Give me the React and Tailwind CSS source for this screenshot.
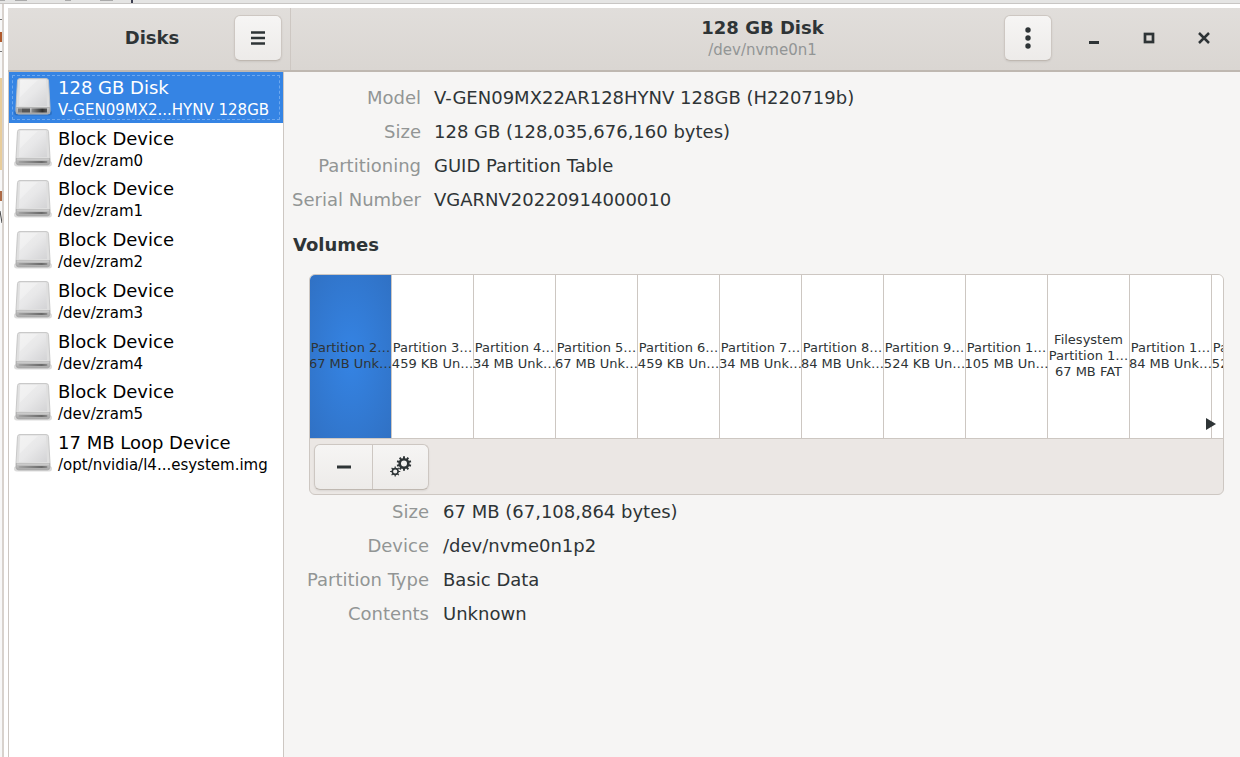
import React from "react";

const disks = [
  { name: "128 GB Disk", path: "V-GEN09MX2...HYNV 128GB", internal: true },
  { name: "Block Device", path: "/dev/zram0" },
  { name: "Block Device", path: "/dev/zram1" },
  { name: "Block Device", path: "/dev/zram2" },
  { name: "Block Device", path: "/dev/zram3" },
  { name: "Block Device", path: "/dev/zram4" },
  { name: "Block Device", path: "/dev/zram5" },
  { name: "17 MB Loop Device", path: "/opt/nvidia/l4...esystem.img" },
];

const volumes = [
  ["Partition 2…", "67 MB Unk…"],
  ["Partition 3…", "459 KB Un…"],
  ["Partition 4…", "34 MB Unk…"],
  ["Partition 5…", "67 MB Unk…"],
  ["Partition 6…", "459 KB Un…"],
  ["Partition 7…", "34 MB Unk…"],
  ["Partition 8…", "84 MB Unk…"],
  ["Partition 9…", "524 KB Un…"],
  ["Partition 1…", "105 MB Un…"],
  ["Filesystem", "Partition 1…", "67 MB FAT"],
  ["Partition 1…", "84 MB Unk…"],
  ["Partition 1…", "524 KB Un…"],
];

const diskInfo = [
  ["Model", "V-GEN09MX22AR128HYNV 128GB (H220719b)"],
  ["Size", "128 GB (128,035,676,160 bytes)"],
  ["Partitioning", "GUID Partition Table"],
  ["Serial Number", "VGARNV20220914000010"],
];

const volumeInfo = [
  ["Size", "67 MB (67,108,864 bytes)"],
  ["Device", "/dev/nvme0n1p2"],
  ["Partition Type", "Basic Data"],
  ["Contents", "Unknown"],
];

const raised =
  "border border-[#cdc7c2] border-b-[#bfb8b1] bg-linear-to-b from-[#f6f5f4] to-[#edebe9] shadow-[0_1px_2px_rgba(0,0,0,0.08)]";

function DriveIcon({ internal }) {
  return (
    <svg width="38" height="40" viewBox="0 0 38 40" className="shrink-0" aria-hidden="true">
      <defs>
        <linearGradient id="driveTop" x1="0" y1="0" x2="1" y2="1">
          <stop offset="0" stopColor="#f0f0f0" />
          <stop offset="0.5" stopColor="#e8e8e9" />
          <stop offset="1" stopColor="#d3d3d5" />
        </linearGradient>
        <linearGradient id="driveFront" x1="0" y1="0" x2="0" y2="1">
          <stop offset="0" stopColor="#c6c6c6" />
          <stop offset="1" stopColor="#a8a8a8" />
        </linearGradient>
        <linearGradient id="driveSlot" x1="0" y1="0" x2="1" y2="0">
          <stop offset="0" stopColor="#a4a4a4" />
          <stop offset="0.8" stopColor="#6a6a6a" />
          <stop offset="1" stopColor="#8c8c8c" />
        </linearGradient>
        <linearGradient id="drivePort" x1="0" y1="0" x2="1" y2="0">
          <stop offset="0" stopColor="#8a8a8a" />
          <stop offset="0.7" stopColor="#303030" />
          <stop offset="1" stopColor="#555" />
        </linearGradient>
      </defs>
      <rect x="0" y="33" width="38" height="5.500" rx="2.700" fill="#000" opacity="0.14" />
      <path d="M3.500 3.500Q3.700 1.500 6 1.500H32Q34.300 1.500 34.500 3.500L36 30V34.500Q36 37 33.500 37H4.500Q2 37 2 34.500V30Z" fill="#dfdfdf" stroke="#c4c4c4" strokeWidth="0.9" />
      <path d="M6 3Q6.100 2.500 7 2.500H31Q31.900 2.500 32 3L33 29H5Z" fill="url(#driveTop)" />
      <path d="M6.500 3H24Q13 13 5.500 21Z" fill="#fff" opacity="0.25" />
      <path d="M2.300 30.500H35.700V34.500Q35.700 36.700 33.500 36.700H4.500Q2.300 36.700 2.300 34.500Z" fill="url(#driveFront)" stroke="#9f9f9f" strokeWidth="0.6" />
      {internal ? (
        <g>
          <rect x="4" y="31.500" width="4" height="4" fill="#7d7d7d" />
          <rect x="8" y="31.500" width="8" height="4" fill="#565656" />
          <rect x="17.500" y="31.500" width="15.500" height="4" fill="url(#drivePort)" />
        </g>
      ) : (
        <g>
          <path d="M3 31H35" stroke="#d8d8d8" strokeWidth="0.8" />
          <rect x="4.500" y="33" width="29" height="2" rx="1" fill="url(#driveSlot)" />
        </g>
      )}
    </svg>
  );
}

function Gear({ cx, cy, r, teeth, width, reach }) {
  return (
    <g transform={`translate(${cx} ${cy})`} stroke="#2e3436" fill="none">
      <circle r={r} strokeWidth={width} />
      {Array.from({ length: teeth }, (_, i) => (
        <path
          key={i}
          d={`M0 ${-r}V${-reach}`}
          strokeWidth={width * 0.75}
          transform={`rotate(${(360 / teeth) * i})`}
        />
      ))}
    </g>
  );
}

function InfoList({ rows, columns }) {
  return (
    <dl className={`grid ${columns} auto-rows-[34px] items-center text-[18px] leading-[22px]`}>
      {rows.map(([label, value]) => (
        <React.Fragment key={label}>
          <dt className="flex justify-end whitespace-nowrap text-[#929595]">{label}</dt>
          <dd className="text-[#2e3436]">{value}</dd>
        </React.Fragment>
      ))}
    </dl>
  );
}

export default function App() {
  return (
    <div className="flex h-screen flex-col overflow-hidden bg-white font-['DejaVu_Sans',sans-serif] text-[#2e3436]">
      <div className="h-1 shrink-0 border-b border-[#c8c6c4] bg-[#e5e5e4]">
        <svg width="150" height="3" viewBox="0 0 150 3" aria-hidden="true">
          <path d="M0 0H5M15 0H27M65 0H71M100 0H113" stroke="#aaa" strokeWidth="2" />
          <path d="M132 0V3" stroke="#3c3f50" strokeWidth="2" />
        </svg>
      </div>
      <div className="flex min-h-0 flex-1">
        <div className="w-1 shrink-0 border-r-2 border-[#d8d2cd] bg-[#f8f8f8]">
          <svg width="2" height="240" viewBox="0 0 2 240" aria-hidden="true">
            <path d="M0 15.500H2M0 47.500H2" stroke="#777" />
            <path d="M0 28H2V38H0Z" fill="#b05a2c" />
            <path d="M0 74H2V166H0Z" fill="#e8cd9b" />
            <path d="M0 187H2V197H0Z" fill="#ad6a45" />
            <path d="M0 207L2 219" stroke="#444" />
          </svg>
        </div>
        <div className="flex min-w-0 flex-1 flex-col pl-1 pt-1">
          <header className="flex h-16 shrink-0 border-b-2 border-[#bfb8b1] bg-linear-to-b from-[#e1dedb] to-[#dad6d2]">
            <div className="flex w-[283px] shrink-0 items-center border-r border-[#cdc7c2] pb-0.5 pr-2">
              <h1 className="flex-1 pl-[62px] text-center text-[18px] font-bold leading-[22px]">Disks</h1>
              <button aria-label="Menu" className={`flex h-[46px] w-12 items-center justify-center rounded-md ${raised}`}>
                <svg width="14" height="14" viewBox="0 0 14 14" aria-hidden="true">
                  <path d="M0 1.500H14M0 7H14M0 12.500H14" stroke="#2e3436" strokeWidth="2.500" />
                </svg>
              </button>
            </div>
            <div className="flex min-w-0 flex-1 items-center pb-0.5 pr-[22px]">
              <div className="min-w-0 flex-1 pl-[230px] pt-0.5 text-center">
                <h2 className="text-[18px] font-bold leading-[22px]">128 GB Disk</h2>
                <p className="text-[15px] leading-[22px] text-[#929595]">/dev/nvme0n1</p>
              </div>
              <div className="flex shrink-0 items-center">
                <button aria-label="Drive options" className={`flex h-[46px] w-12 items-center justify-center rounded-md ${raised}`}>
                  <svg width="6" height="22" viewBox="0 0 6 22" fill="#2e3436" aria-hidden="true">
                    <circle cx="3" cy="3" r="2.700" />
                    <circle cx="3" cy="11" r="2.700" />
                    <circle cx="3" cy="19" r="2.700" />
                  </svg>
                </button>
                <button aria-label="Minimize" className="ml-7 flex size-7 items-center justify-center">
                  <svg width="12" height="12" viewBox="0 0 12 12" aria-hidden="true"><path d="M1 10.500H11" stroke="#2e3436" strokeWidth="3" /></svg>
                </button>
                <button aria-label="Maximize" className="ml-[27px] flex size-7 items-center justify-center">
                  <svg width="12" height="12" viewBox="0 0 12 12" aria-hidden="true"><rect x="2" y="2" width="8" height="8" fill="none" stroke="#2e3436" strokeWidth="2.700" /></svg>
                </button>
                <button aria-label="Close" className="ml-[27px] flex size-7 items-center justify-center">
                  <svg width="12" height="12" viewBox="0 0 12 12" aria-hidden="true"><path d="M1 1L11 11M11 1L1 11" stroke="#2e3436" strokeWidth="2.500" /></svg>
                </button>
              </div>
            </div>
          </header>
          <div className="flex min-h-0 flex-1">
            <nav aria-label="Disks" className="w-[276px] shrink-0 border-x border-[#cdc7c2] bg-white">
              <ul className="grid h-[406px] grid-rows-8">
                {disks.map((disk, i) => (
                  <li key={disk.name + disk.path}>
                    <button
                      className={`flex h-full w-full items-center gap-1.5 pl-[5px] text-left ${i === 0 ? "bg-[#3584e4] text-white outline-1 -outline-offset-4 outline-dashed outline-[#6ea8ee]" : "text-black"}`}
                    >
                      <DriveIcon internal={disk.internal} />
                      <span className="block whitespace-nowrap pt-[3px]">
                        <span className="block text-[18px] leading-[22px]">{disk.name}</span>
                        <span className="block text-[15px] leading-[22px]">{disk.path}</span>
                      </span>
                    </button>
                  </li>
                ))}
              </ul>
            </nav>
            <main className="min-w-0 flex-1 bg-[#f6f5f4] pl-[9px] pr-4 pt-[9px]">
              <InfoList rows={diskInfo} columns="grid-cols-[128px_1fr] gap-x-[13px]" />
              <h3 className="mt-4 text-[18px] font-bold leading-6">Volumes</h3>
              <section aria-label="Volumes" className="relative ml-4 mt-[17px] overflow-hidden rounded-md border border-[#cdc7c2] bg-[#ebe7e4]">
                <div className="flex h-[164px] overflow-hidden border-b border-[#cdc7c2] bg-white">
                  {volumes.map((lines, i) => (
                    <button
                      key={i}
                      className={`flex w-[82px] shrink-0 flex-col items-center justify-center whitespace-nowrap border-r border-[#cdc7c2] pb-0.5 text-[13px] leading-4 ${i === 0 ? "bg-[radial-gradient(ellipse_at_center,#3584e4,#3071c4)]" : ""}`}
                    >
                      {lines.map((line) => (
                        <span key={line}>{line}</span>
                      ))}
                    </button>
                  ))}
                </div>
                <svg width="10" height="12" viewBox="0 0 10 12" className="absolute right-[7px] top-[143px]" aria-hidden="true">
                  <path d="M0 0L10 6L0 12Z" fill="#2e3436" />
                </svg>
                <div className="flex h-[55px] items-center px-1">
                  <div className={`flex h-[46px] rounded-md ${raised}`}>
                    <button aria-label="Delete partition" className="flex w-[58px] items-center justify-center border-r border-[#cdc7c2]">
                      <svg width="14" height="4" viewBox="0 0 14 4" aria-hidden="true"><path d="M0 2H14" stroke="#2e3436" strokeWidth="3" /></svg>
                    </button>
                    <button aria-label="Partition options" className="flex w-[55px] items-center justify-center">
                      <svg width="22" height="22" viewBox="0 0 22 22" aria-hidden="true">
                        <Gear cx={14} cy={7.5} r={4.3} teeth={10} width={2.6} reach={7.3} />
                        <Gear cx={5.2} cy={15.5} r={2.9} teeth={8} width={1.6} reach={5.1} />
                      </svg>
                    </button>
                  </div>
                </div>
              </section>
              <div className="ml-4">
                <InfoList rows={volumeInfo} columns="grid-cols-[120px_1fr] gap-x-[14px]" />
              </div>
            </main>
          </div>
        </div>
      </div>
    </div>
  );
}
